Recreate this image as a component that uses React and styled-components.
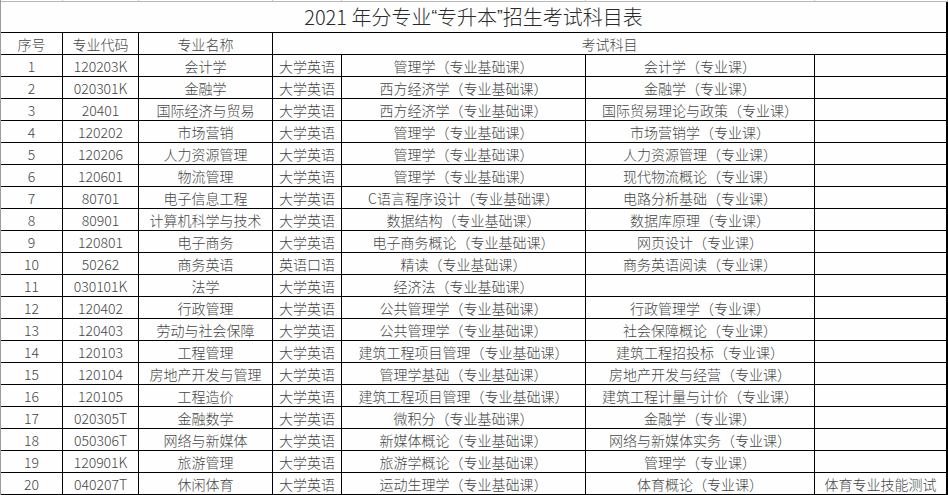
import React from "react";
import styled, { createGlobalStyle } from "styled-components";

const Global = createGlobalStyle`
  html, body { margin: 0; padding: 0; background: #fdfefd; }
  body { font-family: "Noto Sans CJK SC", "Noto Sans", sans-serif; }
`;

const Sheet = styled.div`
  display: grid;
  grid-template-columns: 62px 76px 134px 69px 244px 229px 133px;
  width: 948px;
  box-sizing: border-box;
  border-left: 1px solid #9c9c9c;
  color: #464646;
  font-size: 14px;
  font-weight: 300;
`;

const GutterCell = styled.div`
  height: 2px;
  box-sizing: border-box;
  border-bottom: 1px solid #b8b8b8;
  border-right: 1px solid #c8c8c8;
`;

const TitleCell = styled.div`
  grid-column: 1 / -1;
  height: 31px;
  box-sizing: border-box;
  border-right: 2px solid #000;
  border-bottom: 1px solid #000;
  display: flex;
  align-items: center;
  justify-content: center;
  font-size: 20px;
  color: #2a2a2a;
  padding-bottom: 1px;
`;

const Quote = styled.span`
  font-family: "Liberation Sans", sans-serif;
  font-size: 17px;
`;

const Cell = styled.div`
  grid-column: ${(p) => (p.$span ? `span ${p.$span}` : "auto")};
  height: 22px;
  box-sizing: border-box;
  border-right: ${(p) => (p.$last ? "2px" : "1px")} solid #000;
  border-bottom: 1px solid #000;
  display: flex;
  align-items: center;
  justify-content: center;
  white-space: nowrap;
  overflow: hidden;
  line-height: 1;
`;

const rows = [
  ["1", "120203K", "会计学", "大学英语", "管理学（专业基础课）", "会计学（专业课）", ""],
  ["2", "020301K", "金融学", "大学英语", "西方经济学（专业基础课）", "金融学（专业课）", ""],
  ["3", "20401", "国际经济与贸易", "大学英语", "西方经济学（专业基础课）", "国际贸易理论与政策（专业课）", ""],
  ["4", "120202", "市场营销", "大学英语", "管理学（专业基础课）", "市场营销学（专业课）", ""],
  ["5", "120206", "人力资源管理", "大学英语", "管理学（专业基础课）", "人力资源管理（专业课）", ""],
  ["6", "120601", "物流管理", "大学英语", "管理学（专业基础课）", "现代物流概论（专业课）", ""],
  ["7", "80701", "电子信息工程", "大学英语", "C语言程序设计（专业基础课）", "电路分析基础（专业课）", ""],
  ["8", "80901", "计算机科学与技术", "大学英语", "数据结构（专业基础课）", "数据库原理（专业课）", ""],
  ["9", "120801", "电子商务", "大学英语", "电子商务概论（专业基础课）", "网页设计（专业课）", ""],
  ["10", "50262", "商务英语", "英语口语", "精读（专业基础课）", "商务英语阅读（专业课）", ""],
  ["11", "030101K", "法学", "大学英语", "经济法（专业基础课）", "", ""],
  ["12", "120402", "行政管理", "大学英语", "公共管理学（专业基础课）", "行政管理学（专业课）", ""],
  ["13", "120403", "劳动与社会保障", "大学英语", "公共管理学（专业基础课）", "社会保障概论（专业课）", ""],
  ["14", "120103", "工程管理", "大学英语", "建筑工程项目管理（专业基础课）", "建筑工程招投标（专业课）", ""],
  ["15", "120104", "房地产开发与管理", "大学英语", "管理学基础（专业基础课）", "房地产开发与经营（专业课）", ""],
  ["16", "120105", "工程造价", "大学英语", "建筑工程项目管理（专业基础课）", "建筑工程计量与计价（专业课）", ""],
  ["17", "020305T", "金融数学", "大学英语", "微积分（专业基础课）", "金融学（专业课）", ""],
  ["18", "050306T", "网络与新媒体", "大学英语", "新媒体概论（专业基础课）", "网络与新媒体实务（专业课）", ""],
  ["19", "120901K", "旅游管理", "大学英语", "旅游学概论（专业基础课）", "管理学（专业课）", ""],
  ["20", "040207T", "休闲体育", "大学英语", "运动生理学（专业基础课）", "体育概论（专业课）", "体育专业技能测试"],
];

export default function App() {
  return (
    <>
      <Global />
      <Sheet>
        {Array.from({ length: 7 }).map((_, i) => (
          <GutterCell key={`g${i}`} />
        ))}
        <TitleCell>
          2021 年分专业<Quote>“</Quote>专升本<Quote>”</Quote>招生考试科目表
        </TitleCell>
        <Cell>序号</Cell>
        <Cell>专业代码</Cell>
        <Cell>专业名称</Cell>
        <Cell $span={4} $last>
          考试科目
        </Cell>
        {rows.map((r) =>
          r.map((v, j) => (
            <Cell key={`${r[0]}-${j}`} $last={j === 6}>
              {v}
            </Cell>
          ))
        )}
      </Sheet>
    </>
  );
}
